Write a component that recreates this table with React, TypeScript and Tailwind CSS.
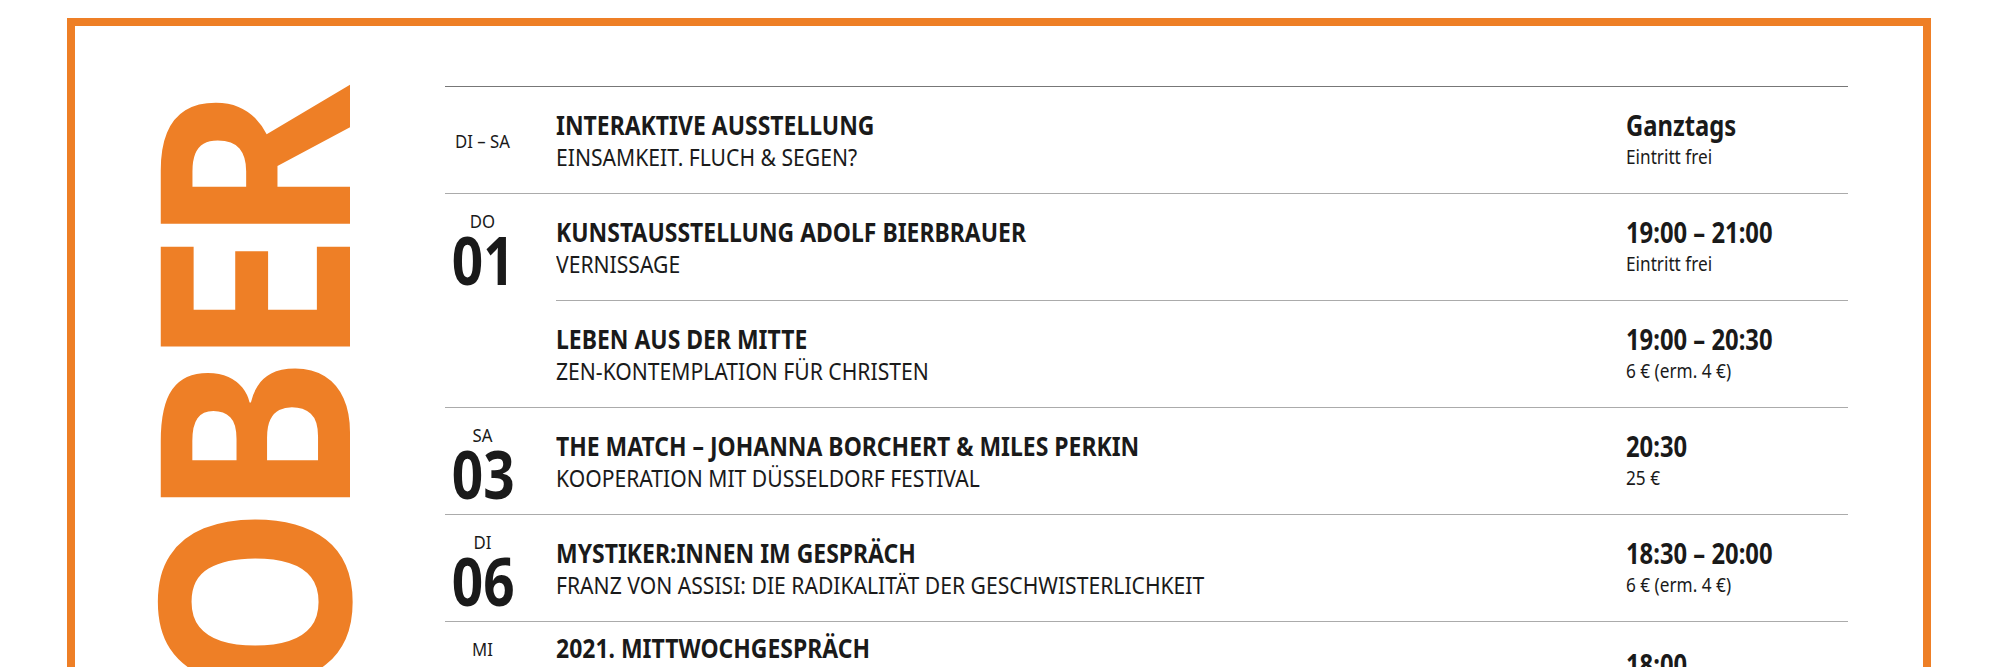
type Event = {
  title: string;
  sub?: string;
  time: string;
  price?: string;
  titlePad?: string;
  timePad?: string;
};

type Day = {
  label: string;
  num?: string;
  labelPad: string;
  events: Event[];
};

const days: Day[] = [
  {
    label: "DI – SA",
    labelPad: "pt-[44px]",
    events: [
      {
        title: "INTERAKTIVE AUSSTELLUNG",
        sub: "EINSAMKEIT. FLUCH & SEGEN?",
        time: "Ganztags",
        price: "Eintritt frei",
      },
    ],
  },
  {
    label: "DO",
    num: "01",
    labelPad: "pt-[17px]",
    events: [
      {
        title: "KUNSTAUSSTELLUNG ADOLF BIERBRAUER",
        sub: "VERNISSAGE",
        time: "19:00 – 21:00",
        price: "Eintritt frei",
      },
      {
        title: "LEBEN AUS DER MITTE",
        sub: "ZEN-KONTEMPLATION FÜR CHRISTEN",
        time: "19:00 – 20:30",
        price: "6 € (erm. 4 €)",
      },
    ],
  },
  {
    label: "SA",
    num: "03",
    labelPad: "pt-[17px]",
    events: [
      {
        title: "THE MATCH – JOHANNA BORCHERT & MILES PERKIN",
        sub: "KOOPERATION MIT DÜSSELDORF FESTIVAL",
        time: "20:30",
        price: "25 €",
      },
    ],
  },
  {
    label: "DI",
    num: "06",
    labelPad: "pt-[17px]",
    events: [
      {
        title: "MYSTIKER:INNEN IM GESPRÄCH",
        sub: "FRANZ VON ASSISI: DIE RADIKALITÄT DER GESCHWISTERLICHKEIT",
        time: "18:30 – 20:00",
        price: "6 € (erm. 4 €)",
      },
    ],
  },
  {
    label: "MI",
    labelPad: "pt-[17px]",
    events: [
      {
        title: "2021. MITTWOCHGESPRÄCH",
        time: "18:00",
        titlePad: "pt-[10px]",
        timePad: "pt-[26px]",
      },
    ],
  },
];

// the print uses a condensed face; squeeze the humanist sans to match
function EventRow({ event, first }: { event: Event; first: boolean }) {
  return (
    <div className={`flex h-[106px] ${first ? "" : "box-content border-t border-[#ababab]"}`}>
      <div className={`w-[1070px] shrink-0 ${event.titlePad ?? "pt-[22px]"}`}>
        <div className="origin-left scale-x-[0.85] whitespace-nowrap text-[27px] font-bold leading-[32px]">
          {event.title}
        </div>
        {event.sub && (
          <div className="origin-left scale-x-[0.88] whitespace-nowrap text-[24px] leading-[32px]">
            {event.sub}
          </div>
        )}
      </div>
      <div className={`flex-1 ${event.timePad ?? "pt-[22px]"}`}>
        <div className="origin-left scale-x-[0.85] whitespace-nowrap text-[28px] font-bold leading-[32px]">
          {event.time}
        </div>
        {event.price && (
          <div className="origin-left scale-x-[0.86] whitespace-nowrap text-[20px] leading-[32px]">
            {event.price}
          </div>
        )}
      </div>
    </div>
  );
}

export default function App() {
  return (
    <div className="h-[667px] w-[2000px] overflow-hidden bg-white pl-[67px] pt-[18px] font-['Noto_Sans',sans-serif] text-[#1a1a1a]">
      <div className="flex h-[900px] w-[1864px] border-8 border-[#ee7f26]">
        <div className="w-[315px] shrink-0 pl-[40px] pt-[71px]">
          <div className="w-fit origin-top scale-y-[0.916]">
            <div className="rotate-180 whitespace-nowrap text-[265px] font-bold leading-none tracking-[-13px] text-[#ee7f26] [writing-mode:vertical-rl]">
              OKTOBER
            </div>
          </div>
        </div>

        <div className="ml-[55px] mt-[60px] w-[1403px]">
          {days.map((day, i) => (
            <div
              key={day.label + i}
              className={`flex border-t ${i === 0 ? "border-[#777777]" : "border-[#ababab]"}`}
            >
              <div className={`w-[75px] shrink-0 text-center ${day.labelPad}`}>
                <div className="scale-x-[0.93] whitespace-nowrap text-[18px] leading-[20px]">
                  {day.label}
                </div>
                {day.num && (
                  <div className="scale-x-[0.82] text-[67px] font-bold leading-[56px]">{day.num}</div>
                )}
              </div>
              <div className="ml-[36px] flex-1">
                {day.events.map((ev, j) => (
                  <EventRow key={ev.title} event={ev} first={j === 0} />
                ))}
              </div>
            </div>
          ))}
        </div>
      </div>
    </div>
  );
}
